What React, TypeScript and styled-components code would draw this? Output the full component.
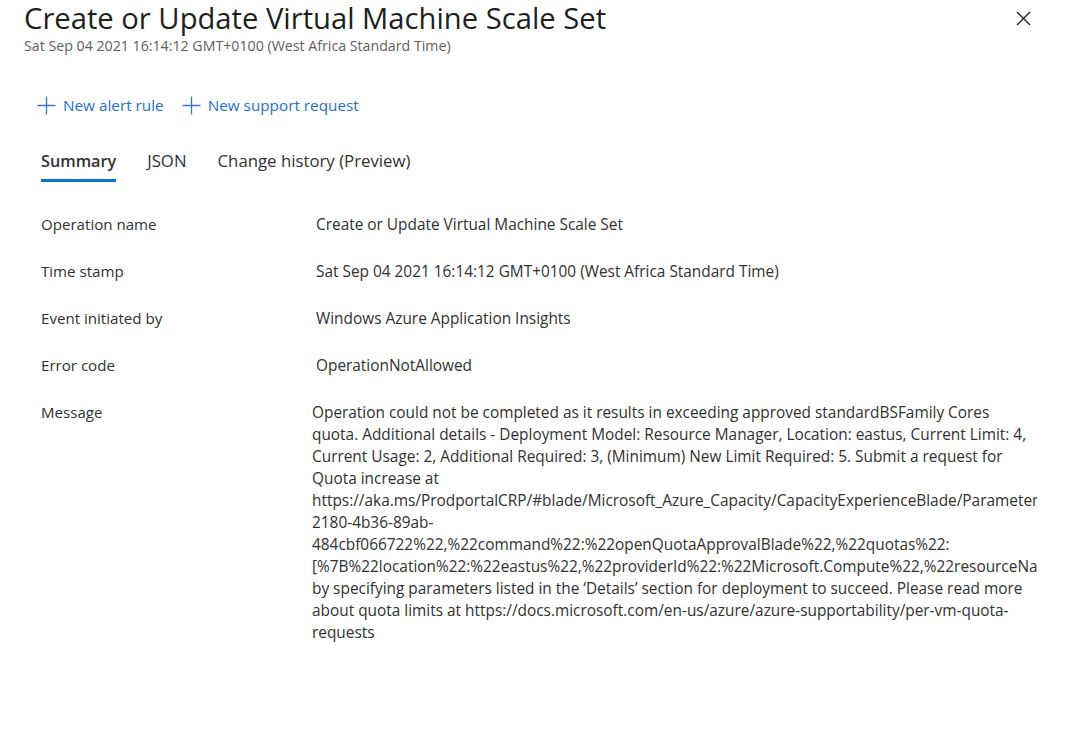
import React from "react";
import styled, { createGlobalStyle } from "styled-components";

const Global = createGlobalStyle`
  html, body { margin: 0; padding: 0; background: #fff; }
  body { font-family: "Open Sans", "Noto Sans", sans-serif; color: #323130; }
`;

const Page = styled.div`
  width: 1067px;
  height: 735px;
  overflow: hidden;
  box-sizing: border-box;
  position: relative;
`;

const Header = styled.header`
  display: flex;
  justify-content: space-between;
  align-items: flex-start;
  padding: 0 0 0 24px;
`;

const TitleBlock = styled.div`
  display: flex;
  flex-direction: column;
`;

const Title = styled.h1`
  margin: 0;
  font-size: 29.2px;
  font-weight: 400;
  line-height: 36px;
  color: #201f1e;
`;

const Subtitle = styled.div`
  font-size: 14.2px;
  line-height: 20px;
  color: #605e5c;
  margin-top: 0;
`;

const CloseButton = styled.button`
  border: 0;
  background: none;
  padding: 0;
  margin: 11px 36px 0 0;
  width: 15px;
  height: 15px;
  display: flex;
  align-items: center;
  justify-content: center;
  cursor: pointer;
`;

const Toolbar = styled.div`
  display: flex;
  align-items: center;
  gap: 18px;
  padding: 0 0 0 37px;
  margin-top: 34px;
  height: 30px;
`;

const ToolButton = styled.button`
  display: flex;
  align-items: center;
  gap: 7px;
  border: 0;
  background: none;
  padding: 0;
  font-family: inherit;
  font-size: 15.3px;
  color: #1f6fc5;
  cursor: pointer;
`;

const Tabs = styled.div`
  display: flex;
  gap: 31px;
  padding-left: 41px;
  margin-top: 29px;
`;

const Tab = styled.div<{ $active?: boolean }>`
  font-size: ${(p) => (p.$active ? "16.2px" : "16.8px")};
  line-height: 24px;
  padding-bottom: 6px;
  font-weight: ${(p) => (p.$active ? 600 : 400)};
  color: #323130;
  border-bottom: 3px solid ${(p) => (p.$active ? "#0078d4" : "transparent")};
`;

const Details = styled.div`
  display: grid;
  grid-template-columns: 275px 1fr;
  padding-left: 41px;
  padding-right: 30px;
  margin-top: 31px;
  row-gap: 24px;
`;

const Label = styled.div`
  font-size: 15.1px;
  line-height: 22px;
  color: #323130;
`;

const Value = styled.div<{ $shift?: number }>`
  font-size: 15.4px;
  line-height: 22px;
  padding-top: 1px;
  color: #323130;
  margin-left: ${(p) => p.$shift ?? 0}px;
  min-width: 0;
  overflow: hidden;
`;

const Line = styled.div`
  white-space: nowrap;
  overflow: hidden;
`;

const PlusIcon = () => (
  <svg width="19" height="19" viewBox="0 0 19 19" fill="none">
    <path d="M9.5 0.5V18.5M0.5 9.5H18.5" stroke="#2f7bd1" strokeWidth="1.3" />
  </svg>
);

const CloseIcon = () => (
  <svg width="15" height="15" viewBox="0 0 15 15" fill="none">
    <path d="M1 1L14 14M14 1L1 14" stroke="#201f1e" strokeWidth="1.4" />
  </svg>
);

const messageLines = [
  "Operation could not be completed as it results in exceeding approved standardBSFamily Cores",
  "quota. Additional details - Deployment Model: Resource Manager, Location: eastus, Current Limit: 4,",
  "Current Usage: 2, Additional Required: 3, (Minimum) New Limit Required: 5. Submit a request for",
  "Quota increase at",
  "https://aka.ms/ProdportalCRP/#blade/Microsoft_Azure_Capacity/CapacityExperienceBlade/Parameters",
  "2180-4b36-89ab-",
  "484cbf066722%22,%22command%22:%22openQuotaApprovalBlade%22,%22quotas%22:",
  "[%7B%22location%22:%22eastus%22,%22providerId%22:%22Microsoft.Compute%22,%22resourceNa",
  "by specifying parameters listed in the \u2018Details\u2019 section for deployment to succeed. Please read more",
  "about quota limits at https://docs.microsoft.com/en-us/azure/azure-supportability/per-vm-quota-",
  "requests",
];

const rows: [string, string][] = [
  ["Operation name", "Create or Update Virtual Machine Scale Set"],
  ["Time stamp", "Sat Sep 04 2021 16:14:12 GMT+0100 (West Africa Standard Time)"],
  ["Event initiated by", "Windows Azure Application Insights"],
  ["Error code", "OperationNotAllowed"],
];

export default function App() {
  return (
    <Page>
      <Global />
      <Header>
        <TitleBlock>
          <Title>Create or Update Virtual Machine Scale Set</Title>
          <Subtitle>Sat Sep 04 2021 16:14:12 GMT+0100 (West Africa Standard Time)</Subtitle>
        </TitleBlock>
        <CloseButton aria-label="Close">
          <CloseIcon />
        </CloseButton>
      </Header>
      <Toolbar>
        <ToolButton>
          <PlusIcon />
          New alert rule
        </ToolButton>
        <ToolButton>
          <PlusIcon />
          New support request
        </ToolButton>
      </Toolbar>
      <Tabs>
        <Tab $active>Summary</Tab>
        <Tab>JSON</Tab>
        <Tab>Change history (Preview)</Tab>
      </Tabs>
      <Details>
        {rows.map(([k, v]) => (
          <React.Fragment key={k}>
            <Label>{k}</Label>
            <Value>{v}</Value>
          </React.Fragment>
        ))}
        <Label>Message</Label>
        <Value $shift={-4}>
          {messageLines.map((l, i) => (
            <Line key={i}>{l}</Line>
          ))}
        </Value>
      </Details>
    </Page>
  );
}
